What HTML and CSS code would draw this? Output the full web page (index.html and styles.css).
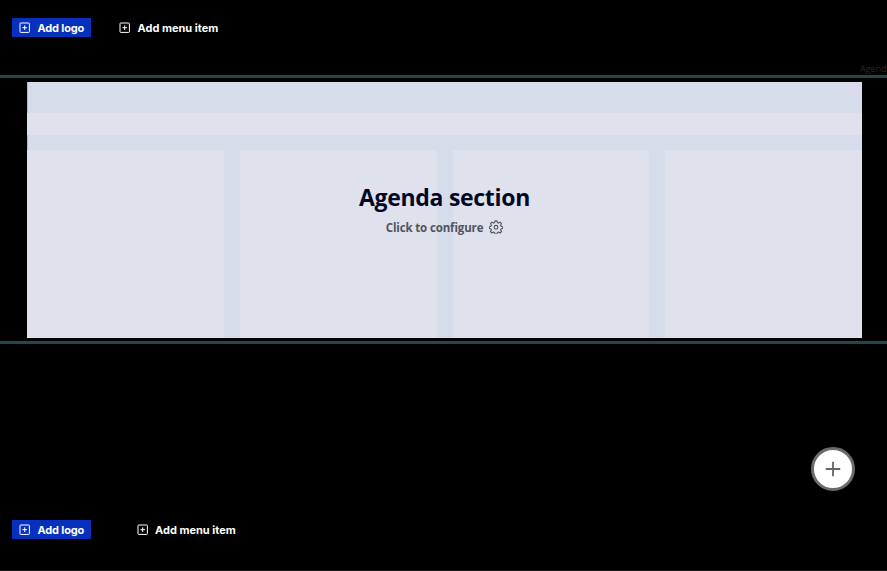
FILE: index.html
```html
<!DOCTYPE html>
<html lang="en">
<head>
<meta charset="utf-8">
<title>Page editor</title>
<link rel="stylesheet" href="styles.css">
</head>
<body>
<svg class="symbols" width="0" height="0">
  <symbol id="add" viewBox="0 0 12 12"><rect x="1" y="1" width="9.4" height="9.4" rx=".7"/><path d="M5.7 3.4v4.6M3.4 5.7h4.6"/></symbol>
</svg>
<header class="bar">
  <button class="add logo"><svg class="icon"><use href="#add"/></svg><span>Add logo</span></button>
  <button class="add item"><svg class="icon"><use href="#add"/></svg><span>Add menu item</span></button>
  <span class="tag">Agend</span>
</header>
<main class="section">
  <div class="panel">
    <div class="strip"></div>
    <div class="columns"><div></div><div></div><div></div><div></div></div>
    <div class="overlay">
      <h1>Agenda section</h1>
      <div class="configure"><span>Click to configure</span>
        <svg class="gear" viewBox="0 0 24 24"><path d="M10.3 1.5h3.4l.8 3 1.8.8 2.8-1.6 2.4 2.4-1.6 2.8.8 1.8 2.8.8v3l-2.8.8-.8 1.8 1.6 2.8-2.4 2.4-2.8-1.6-1.8.8-.8 2.8h-3.4l-.8-2.8-1.8-.8-2.8 1.6-2.4-2.4 1.6-2.8-.8-1.8-2.8-.8v-3l2.8-.8.8-1.8-1.6-2.8 2.4-2.4 2.8 1.6 1.8-.8z"/><circle cx="12" cy="12.5" r="3.2"/></svg>
      </div>
    </div>
  </div>
</main>
<footer class="bar bottom">
  <button class="add logo"><svg class="icon"><use href="#add"/></svg><span>Add logo</span></button>
  <button class="add item"><svg class="icon"><use href="#add"/></svg><span>Add menu item</span></button>
</footer>
<button class="fab" aria-label="Add section"><svg viewBox="0 0 16 16"><path d="M8 .8v14.4M.8 8h14.4"/></svg></button>
</body>
</html>
```
FILE: styles.css
```css
* { box-sizing: border-box; }
body { margin: 0; height: 571px; overflow: hidden; background: #000; font-family: "Open Sans", sans-serif; }
button { border: 0; padding: 0; background: none; color: #fff; font: inherit; }
.symbols { position: absolute; }
.bar { position: relative; display: flex; align-items: flex-start; height: 75px; padding: 18px 0 0 12px; }
.add { display: flex; align-items: center; height: 19px; font: 650 11px/19px Inter, sans-serif; white-space: nowrap; }
.add span { padding-top: 2px; }
.logo { width: 79px; padding-left: 7px; background: #0730bd; }
.logo span { letter-spacing: -.15px; }
.item { margin-left: 28px; }
.icon { width: 12px; height: 12px; margin-right: 6.5px; fill: none; stroke: #fff; stroke-width: 1; }
.tag { position: absolute; left: 860px; top: 62px; font-size: 9px; line-height: 13px; color: #292929; }
.section { height: 269px; padding: 4px 25px 3px 27px; border-top: 3px solid #23474d; border-bottom: 3px solid #23474d; }
.panel { position: relative; display: flex; flex-direction: column; height: 255.5px; padding-top: 31px; background: #d6dce9; box-shadow: inset 1px 0 #b4b5c0; }
.strip { height: 22px; margin-bottom: 15.4px; background: #dfe1ed; }
.columns { display: grid; grid-template-columns: repeat(4, 1fr); gap: 16px; flex: 1; }
.columns div { background: #dfe1ed; }
.overlay { position: absolute; inset: 0; display: flex; flex-direction: column; align-items: center; padding-top: 99px; }
h1 { margin: 0; font-size: 23px; line-height: 32px; font-weight: 700; letter-spacing: -.3px; color: #020824; }
.configure { display: flex; align-items: center; gap: 6px; margin-top: 5px; height: 18px; font-size: 11.5px; font-weight: 700; letter-spacing: -.14px; color: #525360; }
.gear { width: 14px; height: 14px; fill: none; stroke: #525360; stroke-width: 1.9; stroke-linejoin: round; }
.bottom { height: 51px; margin-top: 176px; padding-top: 0; border-bottom: 1px solid #1c1c1c; }
.bottom .item { margin-left: 45.5px; }
.fab { position: fixed; left: 811px; top: 447px; display: grid; place-items: center; width: 44px; height: 44px; border: 3px solid #6b6b6b; border-radius: 50%; background: #fff; }
.fab svg { width: 16px; height: 16px; fill: none; stroke: #666; stroke-width: 1.8; }
```
